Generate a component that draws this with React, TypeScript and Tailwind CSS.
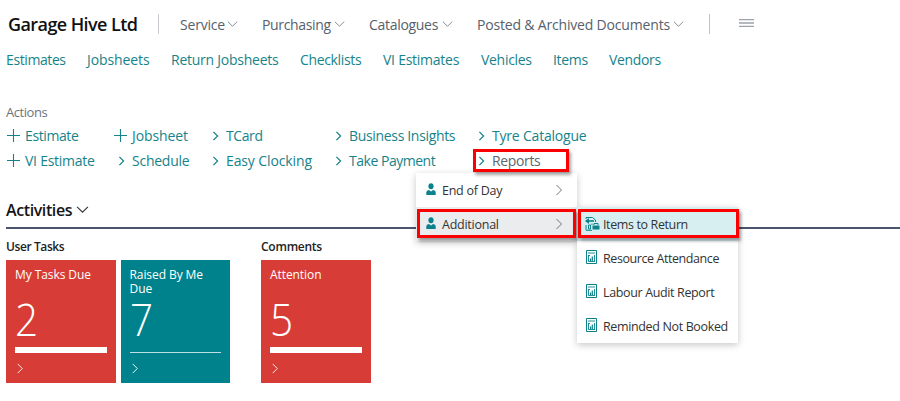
import React from "react";

const Chevron = ({ className = "" }: { className?: string }) => (
  <svg viewBox="0 0 12 8" fill="none" stroke="currentColor" className={className}>
    <path d="M1 1.5 6 6.5 11 1.5" />
  </svg>
);

const Arrow = ({ className = "", w = 1 }: { className?: string; w?: number }) => (
  <svg viewBox="0 0 8 12" fill="none" stroke="currentColor" strokeWidth={w} className={className}>
    <path d="M1.5 1 6.5 6 1.5 11" />
  </svg>
);

const Plus = () => (
  <svg viewBox="0 0 13 13" fill="none" stroke="currentColor" strokeWidth="1.1" className="h-[13px] w-[13px]">
    <path d="M6.5 0V13M0 6.5H13" />
  </svg>
);

const Person = () => (
  <svg viewBox="0 0 10 13" fill="#0b828b" className="mb-[2px] h-[13px] w-[10px]">
    <ellipse cx="5" cy="3.2" rx="2.6" ry="3" />
    <path d="M0.3 12V9.2Q0.3 7.2 3 7L5 8.4 7 7Q9.7 7.2 9.7 9.2V12Z" />
  </svg>
);

const Report = () => (
  <svg viewBox="0 0 11 14" fill="none" stroke="#0b828b" className="mb-[2px] h-[14px] w-[11px]">
    <path d="M.5.5H10.5V13.5H.5Z" />
    <path d="M2 3H9M2.500 5V11.500H9M8.500 5V11.500M2 5.500H4" strokeWidth=".9" />
    <path d="M4.500 11V8.500M6.300 11V6.500" strokeWidth="1.200" />
  </svg>
);

const ReturnIcon = () => (
  <svg viewBox="0 0 15 14" fill="none" stroke="#0b828b" className="mb-px h-[14px] w-[15px]">
    <path d="M1 2V.5H7.500L10.500 3V5" />
    <path d="M9 4H2.5" strokeWidth="1.6" />
    <path d="M0 4 4 1V7Z" fill="#0b828b" stroke="none" />
    <path d="M1 8V13M1 13.300H7M3.500 8V12H5.500V8H3.500M7 6.500V8" />
    <path d="M7.5 8.500H14.5V12.5H7.5Z" fill="#0b828b" stroke="none" />
    <path d="M9 8V6.500H13V8" />
  </svg>
);

const menus = [
  { label: "Service", box: "w-[82px]", text: "w-[45px] tracking-[-0.2px]" },
  { label: "Purchasing", box: "w-[107px]", text: "w-[70px] tracking-[-0.35px]" },
  { label: "Catalogues", box: "w-[108px]", text: "w-[71px] tracking-[-0.3px]" },
  { label: "Posted & Archived Documents", box: "w-[232px]", text: "w-[194px] tracking-[-0.18px]" },
];

const links = [
  { label: "Estimates", cls: "w-[81px] tracking-[-0.4px]" },
  { label: "Jobsheets", cls: "w-[84px] tracking-[-0.1px]" },
  { label: "Return Jobsheets", cls: "w-[129px] tracking-[-0.25px]" },
  { label: "Checklists", cls: "w-[83px] tracking-[-0.35px]" },
  { label: "VI Estimates", cls: "w-[98px] tracking-[-0.25px]" },
  { label: "Vehicles", cls: "w-[72px] tracking-[-0.3px]" },
  { label: "Items", cls: "w-[56px] tracking-[-0.3px]" },
  { label: "Vendors", cls: "w-[60px] tracking-[-0.35px]" },
];

const actions = [
  { label: "Estimate", plus: true, text: "tracking-[-0.4px]" },
  { label: "Jobsheet", plus: true, text: "tracking-[-0.1px]" },
  { label: "TCard", text: "tracking-[-0.4px]" },
  { label: "Business Insights", text: "tracking-[-0.33px]" },
  { label: "Tyre Catalogue", text: "tracking-[-0.2px]" },
  { label: "VI Estimate", plus: true, text: "tracking-[-0.25px]" },
  { label: "Schedule", text: "tracking-[-0.25px]" },
  { label: "Easy Clocking", text: "tracking-[-0.12px]" },
  { label: "Take Payment", text: "tracking-[-0.48px]" },
  { label: "Reports", text: "tracking-[-0.35px] text-[#5c6670]" },
];

const reports = [
  { label: "Items to Return", text: "tracking-[-0.38px]" },
  { label: "Resource Attendance", text: "tracking-[-0.42px]" },
  { label: "Labour Audit Report", text: "tracking-[-0.36px]" },
  { label: "Reminded Not Booked", text: "tracking-[-0.36px]" },
];

const Tile = ({ title, value, teal = false }: { title: string; value: string; teal?: boolean }) => (
  <div className={`flex h-[123px] w-[109.5px] flex-col px-[9px] text-white ${teal ? "bg-[#00828d]" : "bg-[#d83c36]"}`}>
    <div className="mt-[8px] h-[28px] text-[12px] leading-[14px] tracking-[-0.08px]">{title}</div>
    <div className="h-[45px] text-[45px] leading-[45px] font-light">
      <span className="inline-block origin-left scale-x-90">{value}</span>
    </div>
    <div className="flex h-[17px] items-center">
      <div className={teal ? "mt-[5px] h-px w-[92px] bg-white/75" : "h-[6px] w-[92px] bg-white"} />
    </div>
    <Arrow className="mt-[5px] ml-px h-[11px] w-[8px]" />
  </div>
);

const outline = "border-[3px] border-[#fa0000] shadow-[2px_3px_3px_rgba(0,0,0,0.35)]";

export default function App() {
  return (
    <div className="relative h-[401px] w-[900px] overflow-hidden bg-white font-['Open_Sans','Noto_Sans',sans-serif] text-[14px] whitespace-nowrap">
      <header className="flex h-[47px] items-center pl-[8px] text-[#56616d]">
        <h1 className="w-[150px] pt-px text-[18px] font-semibold tracking-[-0.58px] text-[#111]">Garage Hive Ltd</h1>
        <div className="mr-[21px] h-[20px] w-px bg-[#c9ccd0]" />
        {menus.map((m) => (
          <div key={m.label} className={`flex items-center pt-px ${m.box}`}>
            <span className={m.text}>{m.label}</span>
            <Chevron className="ml-[2px] h-[8px] w-[11px] shrink-0 text-[#77818a]" />
          </div>
        ))}
        <div className="h-[20px] w-px bg-[#c0c4c8]" />
        <svg viewBox="0 0 15 8" stroke="#9ba2aa" strokeWidth="1.300" className="mb-px ml-[29px] h-[8px] w-[15px]">
          <path d="M0 .7H15M0 4H15M0 7.300H15" />
        </svg>
      </header>
      <nav className="flex h-[25px] items-center pl-[6px] text-[#16838a]">
        {links.map((l) => (
          <a key={l.label} className={l.cls}>{l.label}</a>
        ))}
      </nav>
      <section className="pt-[30px] pl-[6px]">
        <h2 className="h-[21px] text-[13px] leading-[20px] tracking-[-0.45px] text-[#6b747d]">Actions</h2>
        <div className="grid grid-cols-[107px_94px_123px_143px_120px] grid-rows-[25px_25px] text-[#16838a]">
          {actions.map((a) => (
            <div key={a.label} className="flex items-center">
              <span className="flex w-[19px] items-center pl-px">
                {a.plus ? <Plus /> : <Arrow w={1.5} className="ml-[4px] h-[10px] w-[7px]" />}
              </span>
              <span className={a.text}>{a.label}</span>
            </div>
          ))}
        </div>
      </section>
      <section className="mt-[25px] ml-[6px]">
        <div className="flex h-[31px] items-center border-b-2 border-[#4b566e] pb-[6px]">
          <h2 className="w-[67px] text-[16px] font-semibold tracking-[-0.4px] text-[#151515]">Activities</h2>
          <Chevron className="ml-[3px] h-[9px] w-[13px] text-[#333]" />
        </div>
        <div className="flex text-[12px] text-[#222]">
          <div className="w-[255px]">
            <h3 className="h-[31px] pt-[9px] leading-[18px] font-semibold tracking-[-0.4px]">User Tasks</h3>
            <div className="flex gap-[5px] whitespace-normal">
              <Tile title="My Tasks Due" value="2" />
              <Tile title="Raised By Me Due" value="7" teal />
            </div>
          </div>
          <div>
            <h3 className="h-[31px] pt-[9px] leading-[18px] font-semibold tracking-[-0.25px]">Comments</h3>
            <Tile title="Attention" value="5" />
          </div>
        </div>
      </section>

      <div className="absolute top-[173px] left-[416px] w-[161px] bg-white text-[12.5px] text-[#333] shadow-[0_2px_7px_rgba(0,0,0,0.22)]">
        {["End of Day", "Additional"].map((t) => (
          <div key={t} className={`flex h-[34px] items-center pl-[10px] ${t === "Additional" ? "bg-[#ebecee]" : ""}`}>
            <Person />
            <span className="ml-[6px] w-[113px] pt-[2px] tracking-[-0.25px]">{t}</span>
            <Arrow className="h-[12px] w-[8px] text-[#777]" />
          </div>
        ))}
      </div>
      <div className="absolute top-[207px] left-[577px] w-[161px] bg-white text-[12.5px] text-[#333] shadow-[0_2px_7px_rgba(0,0,0,0.22)]">
        {reports.map((r, i) => (
          <div key={r.label} className={`flex h-[34px] items-center pl-[8px] ${i === 0 ? "bg-[#d8eff1]" : ""}`}>
            <span className="flex w-[18px]">{i === 0 ? <ReturnIcon /> : <span className="ml-px"><Report /></span>}</span>
            <span className={`pt-[2px] ${r.text}`}>{r.label}</span>
          </div>
        ))}
      </div>
      <div className={`absolute top-[149px] left-[473px] h-[23px] w-[96px] ${outline}`} />
      <div className={`absolute top-[209px] left-[417px] h-[29px] w-[159px] ${outline}`} />
      <div className={`absolute top-[209px] left-[578px] h-[29px] w-[161px] ${outline}`} />
    </div>
  );
}
